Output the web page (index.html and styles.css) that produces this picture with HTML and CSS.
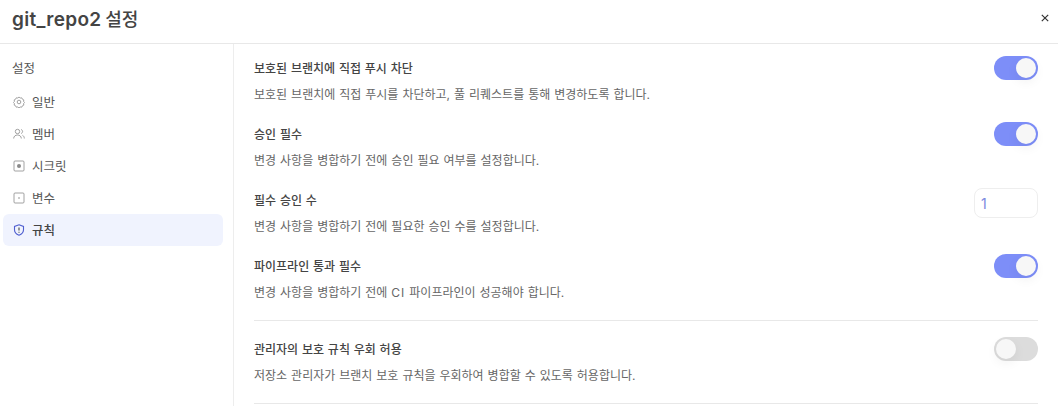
FILE: index.html
```html
<!DOCTYPE html>
<html lang="ko">
<head>
    <meta charset="UTF-8">
    <title>git_repo2 설정</title>
    <link rel="stylesheet" href="styles.css">
</head>
<body>
    <header class="header">
        <h1 class="title"><span class="repo">git_repo2</span> 설정</h1>
        <button class="close" aria-label="닫기">
            <svg width="8" height="8" viewBox="0 0 8 8"><path d="M.8 .8l6.400 6.400M7.200 .8l-6.400 6.400" stroke="#333" stroke-width="1.200" fill="none"/></svg>
        </button>
    </header>
    <div class="body">
        <aside class="side">
            <div class="side-title">설정</div>
            <a class="item">
                <svg class="icon" viewBox="0 0 12 12"><path d="M6 1l1.200 1 1.500-.2.700 1.400 1.400.7-.2 1.500 1 1.100-1 1.100.2 1.500-1.400.7-.7 1.400-1.500-.2-1.200 1-1.200-1-1.500.2-.7-1.400-1.400-.7.2-1.500-1-1.100 1-1.100-.2-1.500 1.400-.7.700-1.400 1.500.2z"/><circle cx="6" cy="6" r="1.800"/></svg>
                일반
            </a>
            <a class="item">
                <svg class="icon" viewBox="0 0 12 12"><circle cx="4.500" cy="3.500" r="2.200"/><path d="M.7 10.500c0-2.200 1.700-3.500 3.800-3.500s3.800 1.300 3.800 3.500M8 1.500c1 .3 1.600 1.100 1.600 2S9 5.200 8 5.500M9.500 7.300c1.100.5 1.800 1.600 1.800 3.200"/></svg>
                멤버
            </a>
            <a class="item">
                <svg class="icon" viewBox="0 0 12 12"><rect x="1" y="1" width="10" height="10" rx="1"/><circle class="dot" cx="6" cy="6" r="2"/></svg>
                시크릿
            </a>
            <a class="item">
                <svg class="icon" viewBox="0 0 12 12"><rect x="1" y="1" width="10" height="10" rx="1"/><circle class="dot" cx="6" cy="6" r=".8"/></svg>
                변수
            </a>
            <a class="item active">
                <svg class="icon" viewBox="0 0 12 12"><path d="M6 .8l4.500 1.600v3.400c0 2.700-2 4.500-4.500 5.400-2.500-.9-4.500-2.700-4.500-5.400V2.400z"/><path class="mark" d="M6 3.500v3M6 7.700v1"/></svg>
                규칙
            </a>
        </aside>
        <main class="main">
            <section class="group">
                <div class="row">
                    <div class="row-text">
                        <div class="row-title">보호된 브랜치에 직접 푸시 차단</div>
                        <div class="row-desc">보호된 브랜치에 직접 푸시를 차단하고, 풀 리퀘스트를 통해 변경하도록 합니다.</div>
                    </div>
                    <span class="toggle on"><i class="knob"></i></span>
                </div>
                <div class="row">
                    <div class="row-text">
                        <div class="row-title">승인 필수</div>
                        <div class="row-desc">변경 사항을 병합하기 전에 승인 필요 여부를 설정합니다.</div>
                    </div>
                    <span class="toggle on"><i class="knob"></i></span>
                </div>
                <div class="row">
                    <div class="row-text">
                        <div class="row-title">필수 승인 수</div>
                        <div class="row-desc">변경 사항을 병합하기 전에 필요한 승인 수를 설정합니다.</div>
                    </div>
                    <input class="num" type="text" value="1">
                </div>
                <div class="row">
                    <div class="row-text">
                        <div class="row-title">파이프라인 통과 필수</div>
                        <div class="row-desc">변경 사항을 병합하기 전에 <span class="latin">CI</span> 파이프라인이 성공해야 합니다.</div>
                    </div>
                    <span class="toggle on"><i class="knob"></i></span>
                </div>
            </section>
            <section class="group">
                <div class="row">
                    <div class="row-text">
                        <div class="row-title">관리자의 보호 규칙 우회 허용</div>
                        <div class="row-desc">저장소 관리자가 브랜치 보호 규칙을 우회하여 병합할 수 있도록 허용합니다.</div>
                    </div>
                    <span class="toggle"><i class="knob"></i></span>
                </div>
            </section>
        </main>
    </div>
</body>
</html>
```
FILE: styles.css
```css
* {
    margin: 0;
    padding: 0;
    box-sizing: border-box;
}

html, body {
    height: 100%;
    overflow: hidden;
}

body {
    display: flex;
    flex-direction: column;
    background: #fff;
    color: #333;
    font-family: Inter, "Noto Sans CJK KR", sans-serif;
}

.header {
    height: 44px;
    flex: none;
    padding: 0 9px 7px 12px;
    border-bottom: 1px solid #e8e8e8;
    display: flex;
    align-items: center;
    justify-content: space-between;
}

.title {
    font-size: 18px;
    font-weight: 500;
    word-spacing: -1px;
    color: #444;
}

.repo {
    font-size: 19px;
    font-weight: 600;
    letter-spacing: .3px;
}

.close {
    width: 8px;
    height: 8px;
    border: 0;
    background: none;
    display: flex;
}

.body {
    flex: 1;
    display: flex;
    min-height: 0;
}

.side {
    width: 234px;
    flex: none;
    padding: 0 10px 0 3px;
    border-right: 1px solid #ededed;
}

.side-title {
    height: 42px;
    padding: 15px 0 0 9px;
    font-size: 12.500px;
    line-height: 20px;
    color: #555;
}

.item {
    height: 32px;
    padding: 0 0 2px 10px;
    border-radius: 6px;
    display: flex;
    align-items: center;
    gap: 7px;
    font-size: 12.500px;
    color: #555;
}

.item.active {
    background: #f0f3fe;
    font-weight: 500;
    color: #444;
}

.icon {
    width: 12px;
    height: 12px;
    margin-top: 2px;
    fill: none;
    stroke: #8a8a8a;
    stroke-width: .8;
}

.icon .dot {
    fill: #8a8a8a;
    stroke: none;
}

.item.active .icon {
    stroke: #4f5fd0;
    stroke-width: 1.100;
}

.item.active .icon .mark {
    stroke: #444;
}

.main {
    flex: 1;
    padding: 0 20px;
}

.group {
    padding-top: 16px;
    border-bottom: 1px solid #e8e8e8;
}

.group:first-child {
    padding-top: 12px;
}

.row {
    height: 66px;
    display: flex;
    align-items: flex-start;
    justify-content: space-between;
}

.row-title {
    padding-top: 2px;
    font-size: 12px;
    line-height: 22px;
    font-weight: 500;
    word-spacing: .6px;
    color: #444;
}

.row-desc {
    margin-top: 4px;
    font-size: 12px;
    line-height: 22px;
    word-spacing: .6px;
    color: #666;
}

.latin {
    letter-spacing: 1px;
}

.toggle {
    width: 44px;
    height: 24px;
    border-radius: 12px;
    background: #7d8ef8;
    padding: 2px;
    display: flex;
}

.toggle.on {
    justify-content: flex-end;
}

.toggle:not(.on) {
    background: #dcdcdc;
}

.knob {
    width: 20px;
    height: 20px;
    border-radius: 50%;
    background: #f7f7f7;
    box-shadow: 0 4px 12px rgba(0, 0, 0, .06);
}

.num {
    width: 64px;
    height: 30px;
    padding: 0 6px;
    border: 1px solid #eeeeee;
    border-radius: 8px;
    font-family: inherit;
    font-size: 14px;
    color: #7c8ae0;
    outline: none;
}
```
